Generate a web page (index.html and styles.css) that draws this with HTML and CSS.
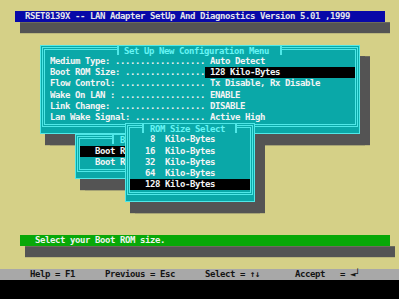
FILE: index.html
```html
<!DOCTYPE html>
<html lang="en">
<head>
  <meta charset="UTF-8">
  <title>RSET8139X Setup</title>
  <link rel="stylesheet" href="styles.css">
</head>
<body>

<div class="screen">
  <!-- Barra de titulo -->
  <header class="titlebar">RSET8139X -- LAN Adapter SetUp And Diagnostics Version 5.01 ,1999</header>

  <div class="desk">
    <!-- Menu principal -->
    <div class="dialog main-menu">
      <div class="legend">Set Up New Configuration Menu</div>
      <ul class="menu">
        <li><span class="label">Medium Type: ..................</span><span class="value">Auto Detect</span></li>
        <li><span class="label">Boot ROM Size: ................</span><span class="value sel">128 Kilo-Bytes</span></li>
        <li><span class="label">Flow Control: .................</span><span class="value">Tx Disable, Rx Disable</span></li>
        <li><span class="label">Wake On LAN : .................</span><span class="value">ENABLE</span></li>
        <li><span class="label">Link Change: ..................</span><span class="value">DISABLE</span></li>
        <li><span class="label">Lan Wake Signal: ..............</span><span class="value">Active High</span></li>
      </ul>
    </div>

    <!-- Submenu Boot ROM (detras) -->
    <div class="dialog boot-menu">
      <div class="legend">Boot ROM</div>
      <ul class="menu">
        <li class="sel">Boot ROM Enable</li>
        <li>Boot ROM Disable</li>
      </ul>
    </div>

    <!-- Seleccion de tamano -->
    <div class="dialog rom-menu">
      <div class="legend">ROM Size Select</div>
      <ul class="menu">
        <li> 8  Kilo-Bytes</li>
        <li>16  Kilo-Bytes</li>
        <li>32  Kilo-Bytes</li>
        <li>64  Kilo-Bytes</li>
        <li class="sel">128 Kilo-Bytes</li>
      </ul>
    </div>
  </div>

  <div class="statusbar">Select your Boot ROM size.</div>
  <footer class="helpbar">      Help = F1      Previous = Esc      Select = ↑↓       Accept   = ◄┘</footer>
</div>

</body>
</html>
```

FILE: styles.css
```css
* {
  box-sizing: border-box;
  margin: 0;
  padding: 0;
}

body {
  background-color: #000;
  font-family: "DejaVu Sans Mono", monospace;
  font-size: 9px;
  font-weight: bold;
  line-height: 11.2px;
  letter-spacing: -0.42px;
  color: #f4f4f4;
}

.titlebar,
.statusbar,
.helpbar,
.legend,
.menu li,
.label,
.value {
  white-space: pre;
}

.screen {
  background-color: #d5d087;
  height: 280px;
  padding-top: 11.2px;
}

.titlebar {
  margin-left: 15px;
  width: 370px;
  height: 11.2px;
  padding-left: 10px;
  background-color: #0808a8;
  color: #e4e4ec;
  box-shadow: 5px 11.2px 0 #545454;
}

.desk {
  position: relative;
  height: 212.8px;
}

/* Ventanas */
.dialog {
  position: absolute;
  background-color: #0aa8a8;
  border: 1px solid #50e8e8;
  box-shadow: 5px 11.2px 0 #545454, 10px 11.2px 0 #545454;
}

.dialog::before {
  content: "";
  position: absolute;
  top: 1px;
  left: 1px;
  right: 1px;
  bottom: 6px;
  border: 3px double #50e8e8;
}

.legend {
  position: relative;
  height: 9px;
  line-height: 10px;
  padding-left: 5px;
  background-color: #0aa8a8;
  border-left: 2px solid #50e8e8;
  border-right: 2px solid #50e8e8;
  color: #66f4f4;
}

.menu {
  position: relative;
  list-style: none;
  padding-top: 1.2px;
}

.menu li {
  height: 11.2px;
}

.sel {
  background-color: #000;
}

.main-menu {
  left: 40px;
  top: 22.4px;
  width: 320px;
  height: 89.6px;
}

.main-menu .legend {
  margin-left: 76px;
  width: 165px;
}

.main-menu li {
  display: flex;
  padding-left: 9px;
}

.main-menu .label {
  width: 155px;
  overflow: hidden;
}

.main-menu .value {
  width: 150px;
  padding-left: 5px;
}

.boot-menu {
  left: 75px;
  top: 112px;
  width: 110px;
  height: 44.8px;
}

.boot-menu .legend {
  margin-left: 36px;
  width: 60px;
  padding-left: 6px;
}

.boot-menu li {
  margin-left: 4px;
  width: 100px;
  padding-left: 15px;
}

.rom-menu {
  left: 125px;
  top: 100.8px;
  width: 130px;
  height: 78.4px;
}

.rom-menu .legend {
  margin-left: 16px;
  width: 95px;
  padding-left: 6px;
}

.rom-menu li {
  margin-left: 4px;
  width: 120px;
  padding-left: 15px;
}

.statusbar {
  margin-left: 20px;
  width: 370px;
  height: 11.2px;
  padding-left: 15px;
  background-color: #08a808;
  color: #eef4ee;
  box-shadow: 5px 11.2px 0 #545454;
}

.helpbar {
  margin-top: 22.4px;
  height: 11.2px;
  background-color: #a8a8a8;
  color: #141414;
}
```
